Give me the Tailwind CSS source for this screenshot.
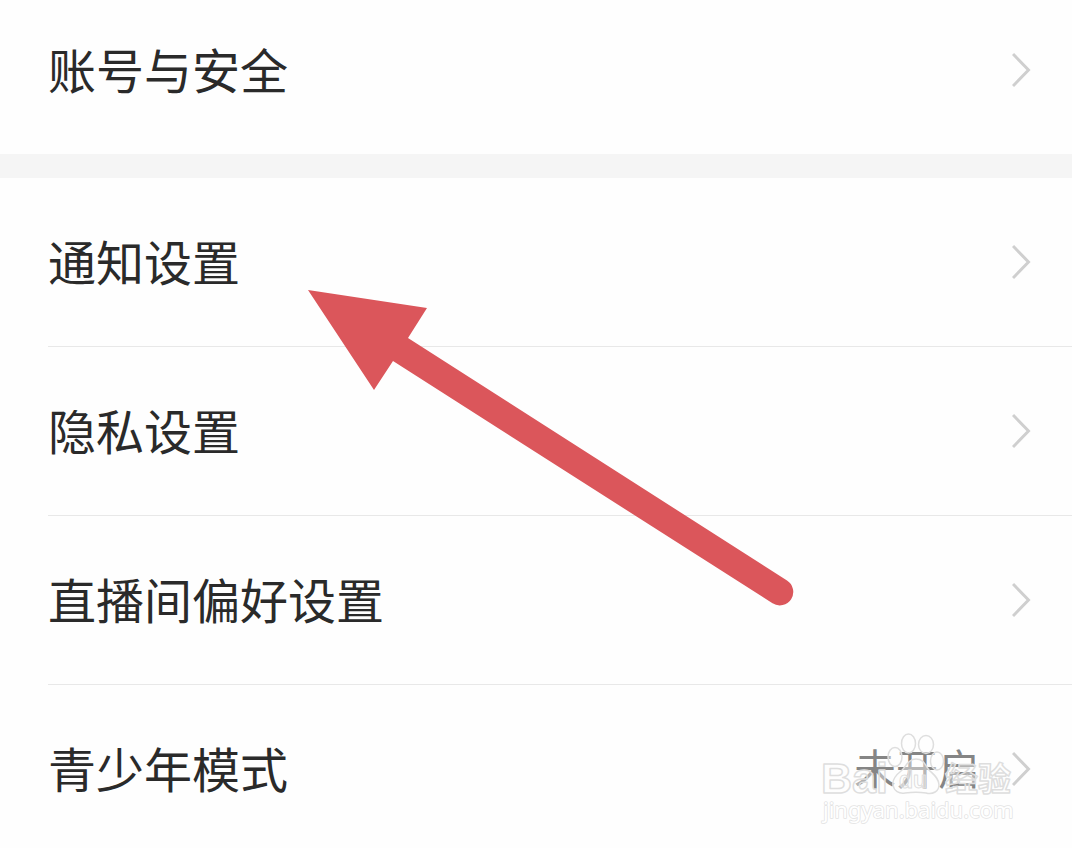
<!DOCTYPE html>
<html lang="zh-CN">
<head>
<meta charset="utf-8">
<meta name="viewport" content="width=device-width, initial-scale=1">
<title>设置</title>
<script src="https://cdn.jsdelivr.net/npm/@tailwindcss/browser@4"></script>
</head>
<body class="bg-[#fefefe] font-['Noto_Sans_CJK_SC',sans-serif] text-5xl text-[#2a2a2a]">
<main class="relative overflow-hidden">
  <nav aria-label="设置">
    <a href="#account" class="flex h-[154px] items-center justify-between pr-10 pb-3.5 pl-12">
      <span class="pb-1">账号与安全</span>
      <svg class="h-9 w-5" viewBox="0 0 20 36" fill="none" stroke="#cfcfcf" stroke-width="3" aria-hidden="true"><path d="M1 2L16.500 18L1 34"/></svg>
    </a>
    <div class="h-6 bg-[#f5f5f5]"></div>
    <ul class="pl-12">
      <li class="border-b border-[#e8e8e8]">
        <a href="#notice" class="flex h-[168px] items-center justify-between pr-10">
          <span class="pb-1">通知设置</span>
          <svg class="h-9 w-5" viewBox="0 0 20 36" fill="none" stroke="#cfcfcf" stroke-width="3" aria-hidden="true"><path d="M1 2L16.500 18L1 34"/></svg>
        </a>
      </li>
      <li class="border-b border-[#e8e8e8]">
        <a href="#privacy" class="flex h-[168px] items-center justify-between pr-10">
          <span class="pb-1">隐私设置</span>
          <svg class="h-9 w-5" viewBox="0 0 20 36" fill="none" stroke="#cfcfcf" stroke-width="3" aria-hidden="true"><path d="M1 2L16.500 18L1 34"/></svg>
        </a>
      </li>
      <li class="border-b border-[#e8e8e8]">
        <a href="#live" class="flex h-[168px] items-center justify-between pr-10">
          <span class="pb-1">直播间偏好设置</span>
          <svg class="h-9 w-5" viewBox="0 0 20 36" fill="none" stroke="#cfcfcf" stroke-width="3" aria-hidden="true"><path d="M1 2L16.500 18L1 34"/></svg>
        </a>
      </li>
      <li class="relative">
        <a href="#teen" class="flex h-[168px] items-center pr-10">
          <span class="grow pb-1">青少年模式</span>
          <span class="mr-8 pb-1 text-[42px] text-[#858585]">未开启</span>
          <svg class="h-9 w-5" viewBox="0 0 20 36" fill="none" stroke="#cfcfcf" stroke-width="3" aria-hidden="true"><path d="M1 2L16.500 18L1 34"/></svg>
        </a>
        <!-- Baidu Jingyan watermark -->
        <svg class="pointer-events-none absolute top-[35px] right-0 h-32 w-[272px]" viewBox="0 0 272 128" fill="#fff" fill-opacity=".4" stroke="#dedede" stroke-width="1.500" stroke-linejoin="round">
          <text x="21" y="73" font-family="Liberation Sans, sans-serif" font-weight="700" font-size="43" stroke-width="1.500">Bai</text>
          <ellipse cx="108.500" cy="23.500" rx="7" ry="9.500"/>
          <ellipse cx="126" cy="24.500" rx="7.500" ry="9"/>
          <ellipse cx="95" cy="37" rx="7" ry="9.500"/>
          <ellipse cx="137" cy="41" rx="6.500" ry="9"/>
          <path d="M116 39C108 39 106 47 101 51C96 55 92 59 93 65C94 71 99 74 105 73C112 72 120 72 126 73C133 75 139 71 139 65C139 58 133 54 129 50C125 45 124 39 116 39Z"/>
          <text x="99" y="68" font-family="Liberation Sans, sans-serif" font-weight="700" font-size="23" stroke-width="1">du</text>
          <text x="145" y="71" font-family="Noto Sans CJK SC, sans-serif" font-weight="700" font-size="33" stroke-width="1.500">经验</text>
          <text x="23" y="98" font-family="Noto Sans, sans-serif" font-size="22" paint-order="stroke" stroke="#e2e2e2" stroke-width="1.500" fill-opacity="1">jingyan.baidu.com</text>
        </svg>
      </li>
    </ul>
  </nav>
  <!-- Annotation arrow pointing at the notification row -->
  <svg class="pointer-events-none absolute top-[290px] left-[308px] h-[316px] w-[486px]" viewBox="0 0 486 316" fill="#db565b" aria-hidden="true">
    <path d="M0 0L119 18L100 48L479 290.500A13.500 13.500 0 0 1 464.500 313.300L85 71L66 100Z"/>
  </svg>
</main>
</body>
</html>
